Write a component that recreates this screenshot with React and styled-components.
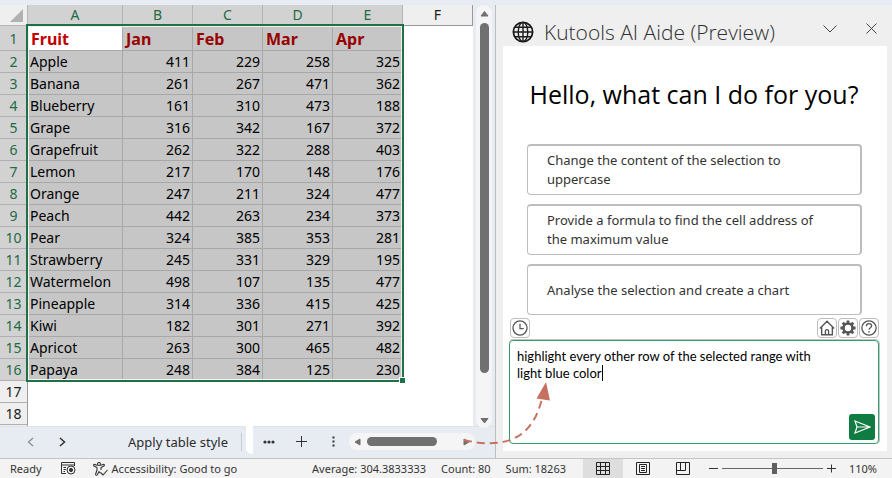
import React from "react";
import styled, { createGlobalStyle } from "styled-components";

const GlobalStyle = createGlobalStyle`
  *, *::before, *::after { box-sizing: border-box; }
  body { margin: 0; background: #f3f3f3; color: #1b1b1b; font-family: "Noto Sans", "Open Sans", sans-serif; }
  button, input, textarea { font: inherit; color: inherit; }
  svg { display: block; flex: none; }
`;

const Page = styled.div`
  display: grid;
  grid-template-rows: minmax(0, 1fr) auto;
  height: 100vh;
  overflow: hidden;
`;

const Workspace = styled.div`
  display: grid;
  grid-template-columns: minmax(0, 1fr) 397px;
  min-height: 0;
  padding-top: 5px;
  background: #e7ebf2;
`;

const Book = styled.section`
  display: grid;
  grid-template-columns: minmax(0, 1fr) 22px;
  grid-template-rows: minmax(0, 1fr) 32px;
  min-height: 0;
`;

const Canvas = styled.div`
  position: relative;
  overflow: hidden;
  background: #fff;
`;

const Grid = styled.table`
  width: 100%;
  table-layout: fixed;
  border-collapse: separate;
  border-spacing: 0;
  font-size: 14px;
  line-height: 20px;
`;

const Col = styled.col`
  width: ${(p) => (p.$width ? `${p.$width}px` : "auto")};
`;

const ColumnHead = styled.th`
  height: 21px;
  padding: 0;
  border-right: 1px solid ${(p) => (p.$picked ? "#b4b4b4" : "#9a9a9a")};
  border-bottom: 1px solid #9a9a9a;
  background: ${(p) => (p.$picked ? "#d2d2d2" : "#efefef")};
  color: ${(p) => (p.$picked ? "#1e6b45" : "#1b1b1b")};
  font-weight: 400;
`;

const Corner = styled.td`
  padding: 0 4px 3px 0;
  border-right: 1px solid #b4b4b4;
  border-bottom: 1px solid #b4b4b4;
  background: #efefef;
  vertical-align: bottom;

  svg { margin-left: auto; }
`;

const RowHead = styled.th`
  height: ${(p) => (p.$tall ? "25px" : "22px")};
  padding: ${(p) => (p.$tall ? "2px 0 0" : "0")};
  border-right: 1px solid #9a9a9a;
  border-bottom: 1px solid #b0b0b0;
  background: ${(p) => (p.$picked ? "#d2d2d2" : "#efefef")};
  color: ${(p) => (p.$picked ? "#1e6b45" : "#1b1b1b")};
  font-weight: 400;
`;

const Cell = styled.td`
  padding: 1px 2px 0;
  border-right: 1px solid #a8a8a8;
  border-bottom: 1px solid #a8a8a8;
  background: #c6c6c6;
  color: #000;
  text-align: ${(p) => (p.$number ? "right" : "left")};
  white-space: nowrap;
`;

const TitleCell = styled(Cell)`
  padding: 2px 3px 0;
  background: ${(p) => (p.$active ? "#fff" : "#c6c6c6")};
  color: ${(p) => (p.$active ? "#c00000" : "#980000")};
  font-size: 16px;
  font-weight: 700;
`;

const BlankCell = styled.td`
  padding: 0;
`;

const Selection = styled.div`
  position: absolute;
  left: 26px;
  top: 19px;
  width: 378px;
  height: 358px;
  border: 2px solid #1f7145;
  box-shadow: inset 0 0 0 1px #f2f2f2;
  pointer-events: none;

  &::after {
    content: "";
    position: absolute;
    right: -4px;
    bottom: -4px;
    width: 7px;
    height: 7px;
    border: 1px solid #fff;
    background: #1f7145;
  }
`;

const ScrollLane = styled.div`
  display: grid;
  padding: 0 3px;
`;

const ScrollTrack = styled.div`
  display: flex;
  flex-direction: ${(p) => (p.$vertical ? "column" : "row")};
  align-items: center;
  gap: 5px;
  border-radius: 8px;
  background: #f5f5f5;
  padding: ${(p) => (p.$vertical ? "5px 0 3px" : "0 4px")};
  ${(p) => (p.$vertical ? "margin-bottom: -2px; z-index: 1;" : "width: 126px; height: 17px;")}
`;

const ScrollArrow = styled.button`
  display: grid;
  place-items: center;
  width: 9px;
  height: 8px;
  padding: 0;
  border: 0;
  background: none;
  color: #707070;
`;

const ScrollRun = styled.div`
  display: flex;
  flex: 1;
  flex-direction: ${(p) => (p.$vertical ? "column" : "row")};
  min-height: 0;
`;

const ScrollThumb = styled.div`
  border-radius: 5px;
  background: #707070;
  ${(p) => (p.$vertical ? "width: 9px; height: 90%;" : "width: 70px; height: 9px;")}
`;

const TabBar = styled.div`
  display: flex;
  grid-column: 1 / -1;
  align-items: stretch;
  min-width: 0;
`;

const TabGroup = styled.div`
  display: flex;
  align-items: center;
  width: 246px;
  padding-bottom: 2px;
  border-radius: 0 6px 0 0;
  border-top: 1px solid #dfe1e6;
`;

const TabGap = styled.div`
  width: 7px;
  height: 28px;
  border-radius: 0 0 0 6px;
  background: #fff;
`;

const TabTools = styled.div`
  display: flex;
  flex: 1;
  align-items: center;
  padding-bottom: 2px;
  border-top: 1px solid #dfe1e6;
`;

const BareButton = styled.button`
  display: grid;
  place-items: center;
  width: ${(p) => p.$width || 32}px;
  height: 24px;
  padding: 0;
  border: 0;
  background: none;
  color: ${(p) => (p.$faded ? "#8b8e94" : "#333")};
`;

const SheetTab = styled.button`
  height: 18px;
  margin-left: auto;
  padding: 0 13px 0 0;
  border: 0;
  border-right: 1px solid #c9ccd2;
  margin-right: 4px;
  background: none;
  color: #2b2b2b;
  font-size: 13px;
  line-height: 18px;
`;

const TabSpacer = styled.div`
  width: 14px;
`;

const Pane = styled.aside`
  position: relative;
  display: grid;
  grid-template-rows: 41px minmax(0, 1fr);
  min-height: 0;
  padding: 0 5px 7px 7px;
  border-left: 1px solid #bdbdbd;
  background: #efefef;
  font-family: "Open Sans", "Noto Sans", sans-serif;
`;

const PaneHeader = styled.header`
  display: flex;
  align-items: center;
  padding: 12px 6px 0 9px;
`;

const PaneTitle = styled.h1`
  flex: 1;
  margin: 0 0 0 10px;
  color: #303030;
  font-size: 21px;
  font-weight: 300;
  line-height: 24px;
  white-space: nowrap;
`;

const HeaderButton = styled(BareButton)`
  margin: -6px 0 0 ${(p) => p.$lead || 0}px;
  color: #444;
`;

const PaneBody = styled.div`
  display: flex;
  flex-direction: column;
  min-height: 0;
  padding: 0 8px 7px 6px;
  background: #fff;
`;

const Greeting = styled.h2`
  margin: 31px 0 33px;
  color: #000;
  font-size: 25px;
  font-weight: 400;
  line-height: 34px;
  text-align: center;
  white-space: nowrap;
`;

const Suggestions = styled.div`
  display: grid;
  gap: 9px;
  padding: 0 17px 0 18px;
`;

const Suggestion = styled.button`
  height: 51px;
  padding: 0 32px 0 19px;
  border: 1px solid #bdbdbd;
  border-top-width: 2px;
  border-right-width: 2px;
  border-radius: 4px;
  background: #fff;
  color: #333;
  font-family: "Noto Sans", "Open Sans", sans-serif;
  font-size: 13px;
  line-height: 19px;
  text-align: left;
`;

const ToolRow = styled.div`
  display: flex;
  gap: 1px;
  margin: 3px 0 2px;
  padding: 0 0 0 1px;
`;

const ToolButton = styled.button`
  display: grid;
  place-items: center;
  width: 20px;
  height: 20px;
  margin-right: ${(p) => (p.$first ? "auto" : "0")};
  padding: 0;
  border: 1px solid #bdbdbd;
  border-radius: 4px;
  background: #fff;
  color: #555;
`;

const Composer = styled.form`
  display: grid;
  flex: 1;
  grid-template-columns: minmax(0, 1fr) 26px;
  gap: 16px;
  min-height: 0;
  padding: 7px 3px 3px 7px;
  border: 1px solid #32a06a;
  border-radius: 4px;
  box-shadow: 0 -1px 0 #c4c4c4, 1px 0 0 #c4c4c4;
`;

const PromptField = styled.div`
  display: grid;
  color: #000;
  font-family: Lato, "Open Sans", sans-serif;
  font-size: 13px;
  line-height: 17px;
`;

const PromptText = styled.textarea`
  grid-area: 1 / 1;
  width: 100%;
  height: 100%;
  padding: 0;
  border: 0;
  outline: 0;
  background: none;
  overflow: hidden;
  resize: none;
`;

const CaretLayer = styled.div`
  grid-area: 1 / 1;
  color: transparent;
  pointer-events: none;
  white-space: pre-wrap;
`;

const Caret = styled.span`
  border-left: 1px solid #000;
`;

const SendButton = styled.button`
  display: grid;
  place-items: center;
  align-self: end;
  width: 26px;
  height: 26px;
  padding: 0;
  border: 0;
  border-radius: 3px;
  background: #107c41;
  color: #fff;
`;

const Pointer = styled.svg`
  position: absolute;
  left: -36px;
  bottom: 6px;
  pointer-events: none;
`;

const StatusBar = styled.footer`
  display: flex;
  align-items: center;
  height: 20px;
  padding: 0 15px 0 10px;
  border-top: 1px solid #c4c4c4;
  background: #f3f3f3;
  color: #333;
  font-size: 11px;
  line-height: 19px;
  white-space: nowrap;
`;

const StatusButton = styled.button`
  display: flex;
  align-items: center;
  gap: 4px;
  margin-left: ${(p) => p.$lead || 0}px;
  padding: 0;
  border: 0;
  background: none;
`;

const Stats = styled.div`
  display: flex;
  gap: 15px;
  margin: 0 17px 0 auto;
`;

const ViewButton = styled.button`
  display: grid;
  place-items: center;
  width: 40px;
  height: 19px;
  padding: 0;
  border: 0;
  background: ${(p) => (p.$on ? "#dedede" : "none")};
  color: #222;
`;

const ZoomRange = styled.input`
  width: 101px;
  height: 14px;
  margin: 0 4px;
  appearance: none;
  background: linear-gradient(#666, #666) center / 100% 1px no-repeat;

  &::-webkit-slider-thumb {
    appearance: none;
    width: 5px;
    height: 11px;
    background: #606060;
  }
`;

const ZoomValue = styled.output`
  width: 29px;
  margin-left: 12px;
  text-align: right;
`;

const months = ["Jan", "Feb", "Mar", "Apr"];
const fruits = [
  ["Apple", 411, 229, 258, 325],
  ["Banana", 261, 267, 471, 362],
  ["Blueberry", 161, 310, 473, 188],
  ["Grape", 316, 342, 167, 372],
  ["Grapefruit", 262, 322, 288, 403],
  ["Lemon", 217, 170, 148, 176],
  ["Orange", 247, 211, 324, 477],
  ["Peach", 442, 263, 234, 373],
  ["Pear", 324, 385, 353, 281],
  ["Strawberry", 245, 331, 329, 195],
  ["Watermelon", 498, 107, 135, 477],
  ["Pineapple", 314, 336, 415, 425],
  ["Kiwi", 182, 301, 271, 392],
  ["Apricot", 263, 300, 465, 482],
  ["Papaya", 248, 384, 125, 230],
];
const suggestions = [
  "Change the content of the selection to uppercase",
  "Provide a formula to find the cell address of the maximum value",
  "Analyse the selection and create a chart",
];
const prompt = "highlight every other row of the selected range with light blue color";

function Icon({ w = 14, h = w, box = `0 0 ${w} ${h}`, stroke = 1, children }) {
  return (
    <svg width={w} height={h} viewBox={box} fill="none" stroke="currentColor" strokeWidth={stroke} aria-hidden="true">
      {children}
    </svg>
  );
}

function Triangle({ points }) {
  return (
    <Icon w={9} h={8}>
      <polygon points={points} fill="currentColor" strokeLinejoin="round" />
    </Icon>
  );
}

function Sheet() {
  return (
    <Canvas>
      <Grid>
        <colgroup>
          <Col $width={28} />
          <Col $width={95} />
          <Col $width={70} />
          <Col $width={70} />
          <Col $width={70} />
          <Col $width={70} />
          <Col />
        </colgroup>
        <thead>
          <tr>
            <Corner>
              <Icon w={13}>
                <path d="M13 0V13H0Z" fill="#b2b2b2" stroke="none" />
              </Icon>
            </Corner>
            {["A", "B", "C", "D", "E", "F"].map((c) => (
              <ColumnHead key={c} scope="col" $picked={c !== "F"}>{c}</ColumnHead>
            ))}
          </tr>
        </thead>
        <tbody>
          <tr>
            <RowHead scope="row" $picked $tall>1</RowHead>
            <TitleCell $active>Fruit</TitleCell>
            {months.map((m) => <TitleCell key={m}>{m}</TitleCell>)}
            <BlankCell />
          </tr>
          {fruits.map(([name, ...values], i) => (
            <tr key={name}>
              <RowHead scope="row" $picked>{i + 2}</RowHead>
              <Cell>{name}</Cell>
              {values.map((v, j) => <Cell key={months[j]} $number>{v}</Cell>)}
              <BlankCell />
            </tr>
          ))}
          {[17, 18, ""].map((n) => (
            <tr key={n}>
              <RowHead scope="row">{n}</RowHead>
              <BlankCell colSpan={6} />
            </tr>
          ))}
        </tbody>
      </Grid>
      <Selection />
    </Canvas>
  );
}

function SheetTabs() {
  return (
    <TabBar>
      <TabGroup>
        <TabSpacer />
        <BareButton $faded aria-label="Previous sheet">
          <Icon w={7} h={10} stroke={1.3}><path d="M6 1 1.5 5 6 9" /></Icon>
        </BareButton>
        <BareButton aria-label="Next sheet">
          <Icon w={7} h={10} stroke={1.5}><path d="M1 1 5.5 5 1 9" /></Icon>
        </BareButton>
        <SheetTab>Apply table style</SheetTab>
      </TabGroup>
      <TabGap />
      <TabTools>
        <BareButton aria-label="More sheets">
          <Icon w={12} h={4}>
            <g fill="currentColor" stroke="none"><circle cx="2" cy="2" r="1.6" /><circle cx="6" cy="2" r="1.6" /><circle cx="10" cy="2" r="1.6" /></g>
          </Icon>
        </BareButton>
        <BareButton aria-label="New sheet">
          <Icon w={11}><path d="M5.5 0V11M0 5.5H11" /></Icon>
        </BareButton>
        <BareButton aria-label="Sheet options">
          <Icon w={3} h={11}>
            <path d="M.5 .5h2v2h-2zM.5 4.5h2v2h-2zM.5 8.5h2v2h-2z" fill="currentColor" stroke="none" />
          </Icon>
        </BareButton>
        <ScrollTrack>
          <ScrollArrow aria-label="Scroll left"><Triangle points="7,1 2,4 7,7" /></ScrollArrow>
          <ScrollRun><ScrollThumb /></ScrollRun>
          <ScrollArrow aria-label="Scroll right"><Triangle points="2,1 7,4 2,7" /></ScrollArrow>
        </ScrollTrack>
      </TabTools>
    </TabBar>
  );
}

function AidePane() {
  return (
    <Pane>
      <PaneHeader>
        <Icon w={22} stroke={1.4} box="0 0 22 22">
          <circle cx="11" cy="11" r="9.6" strokeWidth="1.8" />
          <ellipse cx="11" cy="11" rx="4.8" ry="9.6" />
          <path d="M11 1V21M1 11H21M2.8 6.2H19.2M2.8 15.8H19.2" />
        </Icon>
        <PaneTitle>Kutools AI Aide (Preview)</PaneTitle>
        <HeaderButton $width={24} aria-label="Pane options">
          <Icon w={14} h={8}><path d="M.5 .5 7 7 13.5 .5" /></Icon>
        </HeaderButton>
        <HeaderButton $width={20} $lead={19} aria-label="Close pane">
          <Icon w={11}><path d="M.5 .5 10.5 10.5M10.5 .5 .5 10.5" /></Icon>
        </HeaderButton>
      </PaneHeader>
      <PaneBody>
        <Greeting>Hello, what can I do for you?</Greeting>
        <Suggestions>
          {suggestions.map((s) => <Suggestion key={s}>{s}</Suggestion>)}
        </Suggestions>
        <ToolRow>
          <ToolButton $first aria-label="History">
            <Icon w={16} box="0 0 15 15" stroke={1.2}><circle cx="7.5" cy="7.5" r="6.6" /><path d="M7.5 3.5V8H11" /></Icon>
          </ToolButton>
          <ToolButton aria-label="Home">
            <Icon w={16} box="0 0 15 15" stroke={1.3}><path d="M.8 8 7.5 1.2 14.2 8M2.5 6.8V13.8H12.5V6.8M6 13.8V10.4Q6 9 7.5 9T9 10.4V13.8" /></Icon>
          </ToolButton>
          <ToolButton aria-label="Settings">
            <Icon w={16} box="0 0 15 15">
              <circle cx="7.5" cy="7.5" r="4.2" strokeWidth="2.4" />
              <path d="M7.5 .4V3M7.5 12V14.6M.4 7.5H3M12 7.5H14.6M2.5 2.5 4.3 4.3M10.7 10.7 12.5 12.5M12.5 2.5 10.7 4.3M4.3 10.7 2.5 12.5" strokeWidth="2.6" />
            </Icon>
          </ToolButton>
          <ToolButton aria-label="Help">
            <Icon w={16} box="0 0 15 15" stroke={1.2}>
              <circle cx="7.5" cy="7.5" r="6.7" />
              <path d="M5 5.8Q5 3.4 7.5 3.4T10 5.5C10 7.2 7.5 7.2 7.5 9.2M7.5 10.4V11.8" />
            </Icon>
          </ToolButton>
        </ToolRow>
        <Composer onSubmit={(e) => e.preventDefault()}>
          <PromptField>
            <PromptText aria-label="Message" defaultValue={prompt} spellCheck={false} />
            <CaretLayer aria-hidden="true">{prompt}<Caret /></CaretLayer>
          </PromptField>
          <SendButton aria-label="Send">
            <Icon w={17} h={14} stroke={1.2}><path d="M1 1 16 7 1 13 3 7ZM3 7H16" /></Icon>
          </SendButton>
        </Composer>
      </PaneBody>
      <Pointer width="100" height="72" viewBox="0 0 100 72" fill="none" aria-hidden="true">
        <path d="M4 60C38 68 72 64 82 18" stroke="#c67160" strokeWidth="2" strokeDasharray="8 5" />
        <path d="M86 2 76.5 18.5 90 20.5Z" fill="#c67160" />
      </Pointer>
    </Pane>
  );
}

function Status() {
  return (
    <StatusBar>
      <span>Ready</span>
      <StatusButton $lead={19} aria-label="Record macro">
        <Icon w={15} h={13}>
          <path d="M5 11.5H.5V.5H13.5V4M.5 3H13.5M2.5 5.5H5M2.5 7.5H5M2.5 9.5H4" />
          <circle cx="10" cy="8" r="4" /><circle cx="10" cy="8" r="1.6" fill="currentColor" />
        </Icon>
      </StatusButton>
      <StatusButton $lead={17}>
        <Icon w={15} h={14} stroke={1.1}>
          <circle cx="6" cy="2" r="1.5" />
          <path d="M4.5 3.5 1.5 2.2Q0 2.5 1 4L4 5.5V8L2.5 12.5Q3.5 14 4.5 12.5L6 9.5 7 11M7.5 3.5 10.5 2.2Q12 2.5 11 4L8 5.5V8M7.5 10.5 10 13 14.5 8" />
        </Icon>
        Accessibility: Good to go
      </StatusButton>
      <Stats>
        <span>Average: 304.3833333</span>
        <span>Count: 80</span>
        <span>Sum: 18263</span>
      </Stats>
      <ViewButton $on aria-label="Normal view">
        <Icon w={14} h={13}><path d="M.5 .5H13.5V12.5H.5ZM.5 4.5H13.5M.5 8.5H13.5M4.5 .5V12.5M9.5 .5V12.5" /></Icon>
      </ViewButton>
      <ViewButton aria-label="Page layout view">
        <Icon w={14} h={13}><path d="M.5 .5H13.5V12.5H.5ZM3.5 2.5H10.5V10.5H3.5ZM5 4.5H9M5 6.5H9M5 8.5H9" /></Icon>
      </ViewButton>
      <ViewButton aria-label="Page break view">
        <Icon w={14} h={13}><path d="M.5 .5H13.5V12.5H.5ZM4.5 .5V8M.5 8.5H9.5V.5" /></Icon>
      </ViewButton>
      <StatusButton $lead={6} aria-label="Zoom out"><Icon w={9}><path d="M0 4.5H9" /></Icon></StatusButton>
      <ZoomRange type="range" min="0" max="200" defaultValue="105" aria-label="Zoom" />
      <StatusButton aria-label="Zoom in"><Icon w={9}><path d="M0 4.5H9M4.5 .5V8.5" /></Icon></StatusButton>
      <ZoomValue>110%</ZoomValue>
    </StatusBar>
  );
}

export default function App() {
  return (
    <Page>
      <GlobalStyle />
      <Workspace>
        <Book>
          <Sheet />
          <ScrollLane>
            <ScrollTrack $vertical>
              <ScrollArrow aria-label="Scroll up"><Triangle points="1,6 4.5,1.5 8,6" /></ScrollArrow>
              <ScrollRun $vertical><ScrollThumb $vertical /></ScrollRun>
              <ScrollArrow aria-label="Scroll down"><Triangle points="1,1.5 4.5,6 8,1.5" /></ScrollArrow>
            </ScrollTrack>
          </ScrollLane>
          <SheetTabs />
        </Book>
        <AidePane />
      </Workspace>
      <Status />
    </Page>
  );
}
